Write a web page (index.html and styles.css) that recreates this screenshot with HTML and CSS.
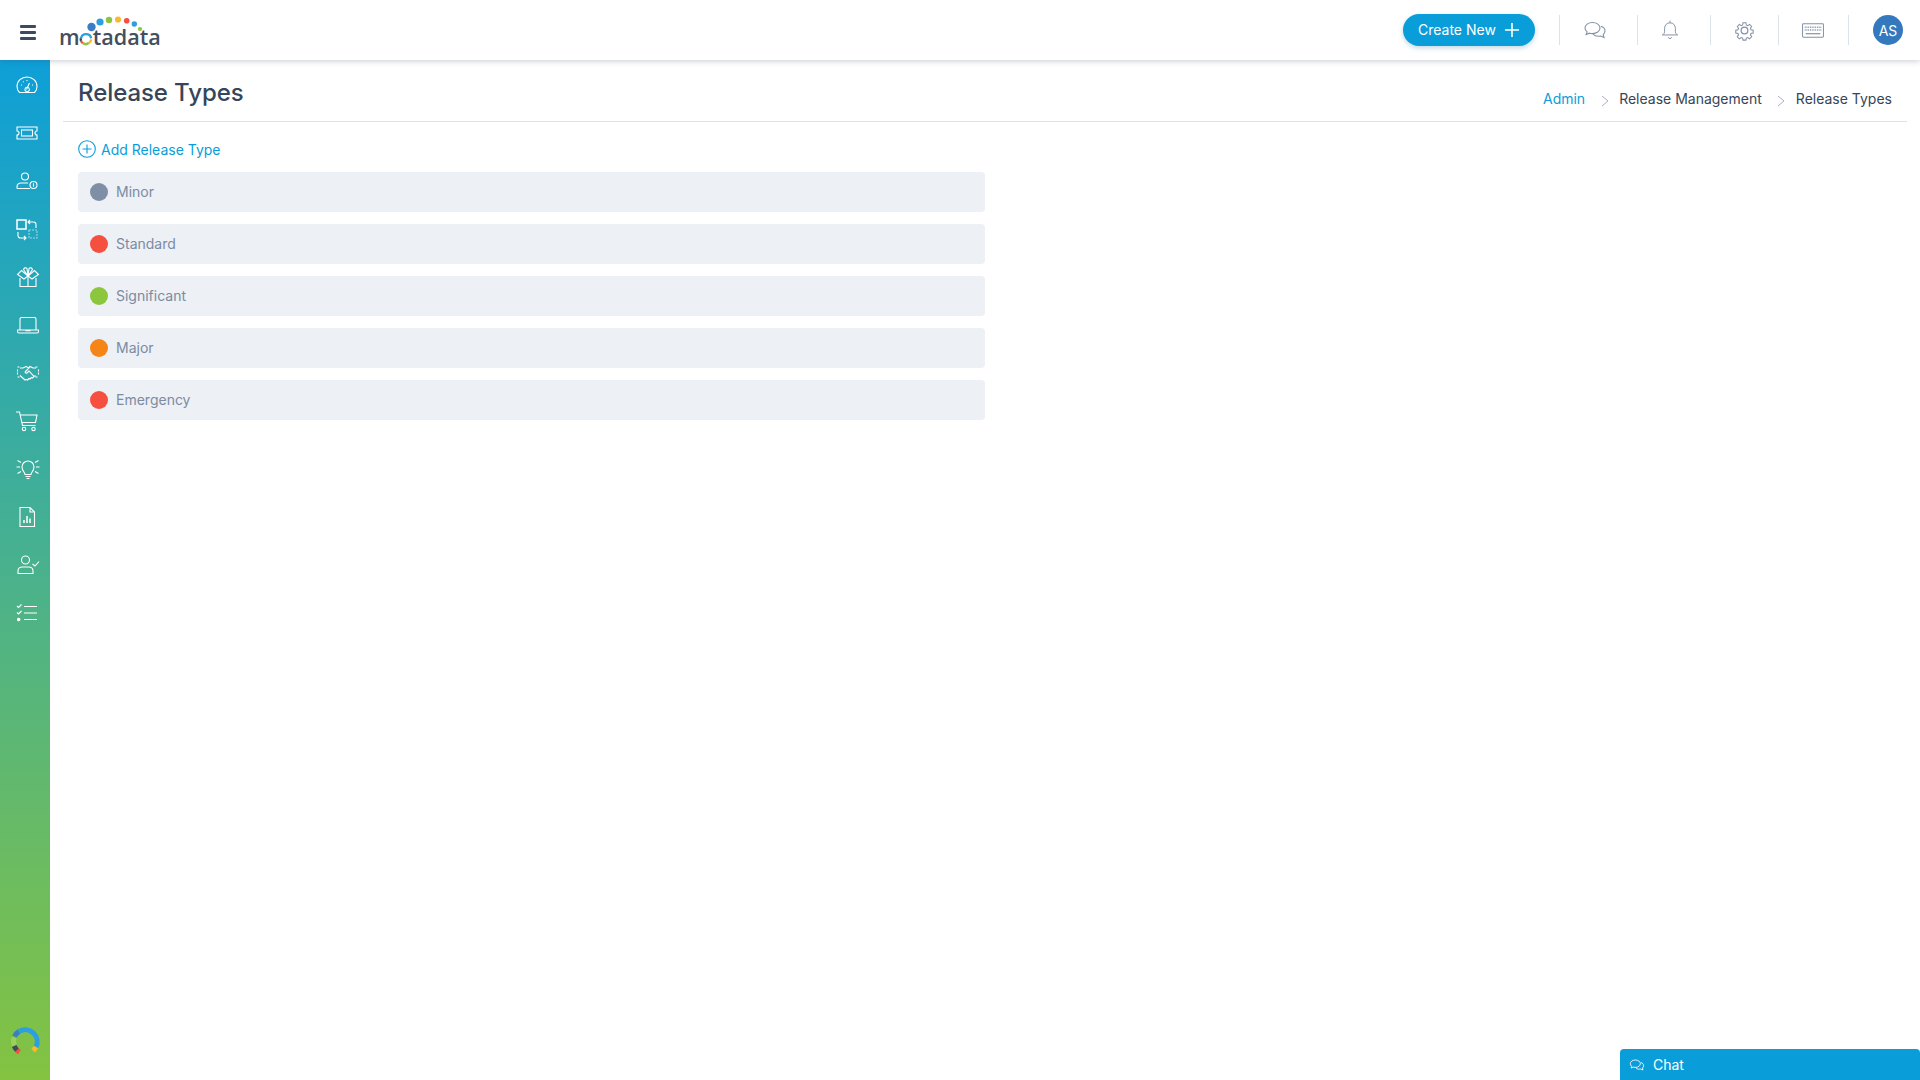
FILE: index.html
```html
<!DOCTYPE html>
<html lang="en">
<head>
<meta charset="utf-8">
<title>Release Types</title>
<link rel="stylesheet" href="styles.css">
</head>
<body>
<header class="topbar">
  <button class="burger" aria-label="Menu"><span></span><span></span><span></span></button>
  <div class="logo">
    <span class="logo-text">m<span class="logo-o">o</span>tadata</span>
    <svg class="logo-dots" viewBox="0 0 100 40" width="100" height="40" aria-hidden="true">
      <circle cx="31.5" cy="11" r="4.2" fill="#3a7fc4"/>
      <circle cx="40" cy="6" r="3.6" fill="#2b9fe0"/>
      <circle cx="49" cy="4" r="3.2" fill="#8cc63f"/>
      <circle cx="58" cy="3.5" r="3.1" fill="#fbb92d"/>
      <circle cx="66.7" cy="4.7" r="2.8" fill="#f44f3f"/>
      <circle cx="74.3" cy="8" r="2.7" fill="#2b9fe0"/>
      <circle cx="80" cy="13" r="2.1" fill="#8cc63f"/>
      <g fill="none" stroke-width="2.4" transform="translate(0 -1.2)">
        <path d="M21 23.5a5.2 5.2 0 0 1 10.2 0" stroke="#2b9fe0"/>
        <path d="M31.2 24.5a5.2 5.2 0 0 1-2.5 3.8" stroke="#fbb92d"/>
        <path d="M28.7 28.3a5.2 5.2 0 0 1-6 0" stroke="#8cc63f"/>
        <path d="M22.7 28.3a5.2 5.2 0 0 1-1.7-2.2" stroke="#f44f3f"/>
        <path d="M21 26.1a5.2 5.2 0 0 1-.1-2.6" stroke="#3f4a5a"/>
      </g>
    </svg>
  </div>
  <div class="top-actions">
    <button class="create"><span class="create-label">Create New</span>
      <svg viewBox="0 0 16 16" width="16" height="16" aria-hidden="true"><path d="M8 1v14M1 8h14" stroke="#fff" stroke-width="1.6" fill="none"/></svg>
    </button>
    <div class="tool tool-chat">
      <svg viewBox="0 0 24 24" width="24" height="24" class="ti" aria-hidden="true"><path d="M9.500 4.500c-4.200 0-7.500 2.400-7.500 5.500 0 1.500.8 2.900 2.100 3.900l-1 2.600 3.500-1.300c.9.300 1.900.4 2.900.4 4.200 0 7.500-2.400 7.500-5.600 0-3.100-3.300-5.500-7.500-5.500z"/><path d="M17.800 8.300c2.500.7 4.200 2.500 4.200 4.700 0 1.400-.7 2.600-1.800 3.500l.8 3-3.300-1.500c-.8.200-1.500.3-2.300.3-2.300 0-4.400-.9-5.500-2.300"/></svg>
    </div>
    <div class="tool tool-bell">
      <svg viewBox="0 0 20 24" width="18" height="22" class="ti" aria-hidden="true"><path d="M10 1.500V4M10 4c-3.600 0-6 2.700-6 6.200V14c0 1.500-1.200 2.700-2.500 3.500h17c-1.300-.8-2.500-2-2.500-3.500v-3.800C16 6.700 13.600 4 10 4z"/><path d="M8 20c.3 1 1 1.500 2 1.500s1.700-.5 2-1.500"/></svg>
    </div>
    <div class="tool tool-gear">
      <svg viewBox="0 0 24 24" width="23" height="23" class="ti ti-gear" aria-hidden="true"><circle cx="12" cy="12" r="3.500"/><path d="M10.200 2.500h3.600l.5 2.700 1.800.8 2.300-1.600 2.500 2.600-1.500 2.300.7 1.800 2.700.5v3.600l-2.700.5-.7 1.800 1.500 2.300-2.500 2.500-2.300-1.500-1.800.7-.5 2.500h-3.600l-.5-2.500-1.800-.7-2.300 1.500-2.500-2.500 1.500-2.300-.7-1.800-2.700-.5v-3.600l2.700-.5.700-1.800L3.100 7l2.500-2.600 2.300 1.600 1.800-.8z" transform="translate(1.900 1.900) scale(.84)"/></svg>
    </div>
    <div class="tool tool-keys">
      <svg viewBox="0 0 24 16" width="22" height="15" class="ti" aria-hidden="true"><rect x=".6" y=".6" width="22.800" height="14.800" rx="1"/><path d="M3 4.500h18M3 7.500h18" stroke-width="1.500" stroke-dasharray="1 .9"/><path d="M4 11.500h16" stroke-width="1.300"/></svg>
    </div>
    <div class="tool tool-user"><span class="avatar">AS</span></div>
  </div>
</header>

<div class="shell">
  <nav class="sidebar">
    <a class="nav"><svg viewBox="0 0 24 24" aria-hidden="true"><path d="M4.500 19.500C3 18 2 15.800 2 13.500 2 8 6.500 4 12 4s10 4 10 9.500c0 2.300-1 4.500-2.500 6z"/><path d="M12 7v1M6 12h1M17 12h1M8 8.500l.6.600M11.500 16.500l3-6.500M14.300 16a2.200 2.200 0 1 1-4.300 0 2.200 2.200 0 0 1 4.300 0z"/></svg></a>
    <a class="nav"><svg viewBox="0 0 24 24" aria-hidden="true"><path d="M2 6h20v4a2 2 0 0 0 0 4v4H2v-4a2 2 0 0 0 0-4z"/><rect x="6.500" y="9" width="11" height="6"/></svg></a>
    <a class="nav"><svg viewBox="0 0 24 24" aria-hidden="true"><circle cx="10" cy="7.500" r="3.500"/><path d="M2 19.500v-2c0-2.200 2-3.500 4-3.500h7M2 19.500h13"/><circle cx="18.500" cy="16" r="3.500"/><path d="M18.500 14.300v3.400"/></svg></a>
    <a class="nav"><svg viewBox="0 0 24 24" aria-hidden="true"><rect x="2" y="3" width="9" height="9" stroke-width="1.500"/><path d="M13 5h5a2.500 2.500 0 0 1 3 2.500V11M15 3l-2 2 2 2M11 21H6a2.500 2.500 0 0 1-3-2.500V15M9 23l2-2-2-2"/><rect x="14" y="13" width="8" height="8" opacity=".55" stroke-dasharray="2 1"/></svg></a>
    <a class="nav nav-shift"><svg viewBox="0 0 24 24" aria-hidden="true"><path d="M4 13v8.500h16V13M12 11v10.500"/><path d="M12 11 5.500 5.500 1.500 9.500 8 14zM12 11l6.500-5.500 4 4L16 14z"/><path d="M7.500 4.500C8 3 10 2 11 3.500L12 11l1-7.500c1-1.500 3-.5 3.500 1L12 11z"/></svg></a>
    <a class="nav nav-shift"><svg viewBox="0 0 24 24" aria-hidden="true"><path d="M4 17V6a1.500 1.500 0 0 1 1.500-1.500h13A1.500 1.500 0 0 1 20 6v11"/><path d="M1.500 17h21v1.500a1.500 1.500 0 0 1-1.500 1.500H3a1.500 1.500 0 0 1-1.500-1.500zM10 17v.8h4V17"/></svg></a>
    <a class="nav nav-shift"><svg viewBox="0 0 24 24" aria-hidden="true"><path d="M4 7h3l3-1.500 3 1.500-3.500 3.500c-1 1 .5 2 1.500 1.500l2-2 5 5.500-1.500 1.500-1-.5-1.500 1.500-1-.5-1.500 1.500-1.500-.5-1 .5-5-4.500H4M20 7h-3l-3-1.500-1 1M20 15h-2"/><path d="M1.500 6h3M1.500 16h3M19.500 6h3M19.500 16h3M1.500 8.500v5M22.500 8.500v5" stroke-dasharray="2 1"/></svg></a>
    <a class="nav"><svg viewBox="0 0 24 24" aria-hidden="true"><path d="M1 3h3.500l3 13.500h13M5.200 6H22l-1.500 7.500H7"/><circle cx="9" cy="20" r="1.700"/><circle cx="18.500" cy="20" r="1.700"/></svg></a>
    <a class="nav nav-shift"><svg viewBox="0 0 24 24" aria-hidden="true"><path d="M9 17.500c0-2-3-3.500-3-7.500a6 6 0 0 1 12 0c0 4-3 5.500-3 7.500zM9.500 19.500h5M10.500 21.500h3"/><path d="M.5 10H4M20 10h3.500M1.500 3.500 5 5.500M22.500 3.500 19 5.500M1.500 16.500 5 14.500M22.500 16.500 19 14.500"/></svg></a>
    <a class="nav"><svg viewBox="0 0 24 24" aria-hidden="true"><path d="M5 2.500h10l4.500 4.500v14.500H5zM15 2.500V7h4.500"/><path d="M9 18v-3M12 18v-7M15 18v-4.500" stroke-width="1.500"/></svg></a>
    <a class="nav nav-shift"><svg viewBox="0 0 24 24" aria-hidden="true"><circle cx="9.500" cy="7" r="4"/><path d="M2 20.500v-2.500c0-2.500 2-4 4.500-4h6c2.500 0 4.500 1.500 4.500 4v2.500z"/><path d="m16.500 11 2.500 2 4-4.500"/></svg></a>
    <a class="nav"><svg viewBox="0 0 24 24" aria-hidden="true"><path d="m2 5 1.500 1.500L6.500 3.500M2 11.500 3.500 13l3-3M9 5.500h13M9 12h13M9 18.500h13"/><circle cx="3.700" cy="18.500" r="1.200" fill="#fff"/></svg></a>
    <div class="side-logo">
      <svg viewBox="0 0 32 32" width="32" height="32" aria-hidden="true">
        <g fill="none" stroke-width="5">
          <path d="M5 12.500a12 12 0 0 0 .3 8" stroke="#9bd05a"/>
          <path d="M5.500 11.500A12 12 0 0 1 10 6.500" stroke="#3a7fc4"/>
          <path d="M10 6.500A12 12 0 0 1 27 22" stroke="#2b9fe0"/>
          <path d="M27 22a12 12 0 0 1-3 3.500" stroke="#fbb92d"/>
          <path d="M10.500 27a12 12 0 0 1-3-2.500" stroke="#f44f3f"/>
          <path d="M8 25a12 12 0 0 1-2.800-4" stroke="#3f4a5a"/>
        </g>
      </svg>
    </div>
  </nav>

  <main class="content">
    <div class="page-head">
      <h1>Release Types</h1>
      <ol class="crumbs">
        <li class="crumb-link">Admin</li>
        <li class="sep"><svg viewBox="0 0 8 12" width="8" height="12" aria-hidden="true"><path d="m1 1 6 5-6 5" fill="none" stroke="#a9b3c2" stroke-width="1"/></svg></li>
        <li>Release Management</li>
        <li class="sep"><svg viewBox="0 0 8 12" width="8" height="12" aria-hidden="true"><path d="m1 1 6 5-6 5" fill="none" stroke="#a9b3c2" stroke-width="1"/></svg></li>
        <li>Release Types</li>
      </ol>
    </div>
    <a class="add">
      <svg viewBox="0 0 18 18" width="18" height="18" aria-hidden="true"><circle cx="9" cy="9" r="8.300" fill="none" stroke="#099dd9" stroke-width="1.100"/><path d="M9 4.500v9M4.500 9h9" stroke="#099dd9" stroke-width="1.100"/></svg>
      Add Release Type
    </a>
    <ul class="types">
      <li class="type"><span class="dot dot-grey"></span><span class="type-name">Minor</span></li>
      <li class="type"><span class="dot dot-red"></span><span class="type-name">Standard</span></li>
      <li class="type"><span class="dot dot-green"></span><span class="type-name">Significant</span></li>
      <li class="type"><span class="dot dot-orange"></span><span class="type-name">Major</span></li>
      <li class="type"><span class="dot dot-red"></span><span class="type-name">Emergency</span></li>
    </ul>
  </main>
</div>

<div class="chat">
  <svg viewBox="0 0 24 24" width="16" height="16" aria-hidden="true"><path d="M9.500 4.500c-4.200 0-7.500 2.400-7.500 5.500 0 1.500.8 2.900 2.100 3.900l-1 2.600 3.500-1.300c.9.300 1.900.4 2.900.4 4.200 0 7.500-2.400 7.500-5.600 0-3.100-3.300-5.500-7.500-5.500z"/><path d="M17.800 8.300c2.500.7 4.200 2.500 4.200 4.700 0 1.400-.7 2.600-1.800 3.500l.8 3-3.300-1.500c-.8.200-1.500.3-2.300.3-2.300 0-4.400-.9-5.500-2.300"/></svg>
  Chat
</div>
</body>
</html>
```

FILE: styles.css
```css
* { box-sizing: border-box; }
html, body { margin: 0; height: 100%; overflow: hidden; }
body { font-family: Inter, "Noto Sans", sans-serif; font-size: 14px; color: #364658; background: #fff; }

.topbar {
  position: relative; z-index: 2;
  height: 60px; display: flex; align-items: center;
  background: #fff; box-shadow: 0 1px 6px rgba(60, 70, 90, .28);
}
.burger {
  width: 16px; height: 15px; margin: 4px 0 0 20px; padding: 0; border: 0; background: none;
  display: flex; flex-direction: column; justify-content: space-between;
}
.burger span { display: block; height: 3px; border-radius: 1px; background: #3d4b60; }
.logo { position: relative; width: 100px; height: 40px; margin-left: 24px; }
.logo-text {
  position: absolute; left: -1px; top: 12px;
  font-family: "Open Sans", sans-serif; font-weight: 600; font-size: 21.6px; line-height: 30px;
  color: #434e5e;
}
.logo-o { color: transparent; }
.logo-dots { position: absolute; left: 0; top: 6px; overflow: visible; }

.top-actions { margin-left: auto; display: flex; align-items: center; height: 100%; padding-right: 17px; }
.create {
  display: flex; align-items: center; gap: 8px;
  width: 132px; height: 32px; padding: 0 15px; border: 0; border-radius: 16px; margin: -1px 24px 0 0;
  background: #099dd9; color: #fff; font: 400 14px Inter, sans-serif; white-space: nowrap;
  box-shadow: 0 2px 5px rgba(9, 100, 150, .25);
}
.create-label { margin-top: -1px; }
.tool { height: 30px; display: flex; align-items: center; justify-content: center; border-left: 1px solid #dde2ea; }
.tool-chat { width: 78px; padding-right: 8px; }
.tool-bell { width: 73px; padding-right: 9px; }
.tool-gear { width: 68px; padding-right: 1px; }
.tool-keys { width: 70px; padding-right: 1px; }
.tool-user { width: 55px; justify-content: flex-end; }
.ti { fill: none; stroke: #8492a6; stroke-width: 1.1; }
.ti-gear { stroke-width: 1.3; }
.avatar {
  width: 30px; height: 30px; border-radius: 50%; background: #3478bd; color: #fff;
  display: flex; align-items: center; justify-content: center; font-size: 14px; font-weight: 400;
}

.shell { display: flex; height: calc(100vh - 60px); }
.sidebar {
  position: relative;
  width: 50px; flex: none; padding: 1px 0 0 3px;
  background: linear-gradient(180deg, #0e9fd8 0%, #84c341 100%);
}
.nav { display: flex; align-items: center; justify-content: center; height: 48px; }
.nav svg { width: 24px; height: 24px; fill: none; stroke: #fff; stroke-width: 1.100; }
.nav-shift { padding-left: 2px; }
.side-logo { position: absolute; left: 9px; bottom: 23px; width: 32px; height: 32px; }

.content { flex: 1; min-width: 0; padding: 0 13px 0 13px; }
.page-head {
  display: flex; justify-content: space-between; align-items: flex-start;
  height: 62px; padding: 0 15px; border-bottom: 1px solid #dde2ea;
}
.page-head h1 { margin: 18px 0 0; font-size: 24px; line-height: 30px; font-weight: 500; letter-spacing: -.08px; color: #364658; }
.crumbs { list-style: none; display: flex; align-items: flex-start; margin: 30px 0 0; padding: 0; line-height: 17px; }
.crumb-link { color: #099dd9; }
.sep { width: 34px; height: 17px; display: flex; justify-content: center; padding: 5px 0 0 5px; }

.add {
  display: flex; align-items: center; gap: 5px; margin: 17px 0 0 15px; height: 20px;
  color: #099dd9; font-size: 14px;
}
.types { list-style: none; margin: 13px 0 0 15px; padding: 0; width: 907px; display: flex; flex-direction: column; gap: 12px; }
.type {
  display: flex; align-items: center; gap: 8px; height: 40px; padding: 0 12px;
  background: #edf0f5; border-radius: 4px; color: #7b8ba3; font-size: 14px;
}
.type-name { margin-top: -1px; }
.dot { width: 18px; height: 18px; border-radius: 50%; flex: none; }
.dot-grey { background: #7f8fa6; }
.dot-red { background: #f44f3f; }
.dot-green { background: #8cc63f; }
.dot-orange { background: #f58518; }

.chat {
  position: fixed; right: 0; bottom: 0; width: 300px; height: 31px;
  display: flex; align-items: center; gap: 8px; padding: 0 9px;
  background: #099dd9; color: #fff; font-size: 14px; font-weight: 400; border-radius: 4px 4px 0 0;
}
.chat svg { fill: none; stroke: #fff; stroke-width: 1.300; }
```
